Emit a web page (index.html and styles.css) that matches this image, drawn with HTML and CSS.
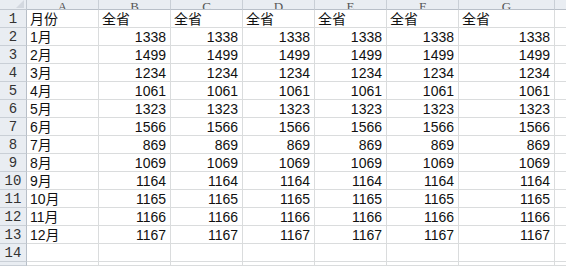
FILE: index.html
```html
<!DOCTYPE html>
<html>
<head>
<meta charset="utf-8">
<link rel="stylesheet" href="styles.css">
</head>
<body>
<div class="sheet" id="sheet"></div>
<script>
const vals = [1338,1499,1234,1061,1323,1566,869,1069,1164,1165,1166,1167];
const cols = ['A','B','C','D','E','F','G',''];
const s = document.getElementById('sheet');
function cell(cls, txt){const d=document.createElement('div');d.className=cls;if(txt){const sp=document.createElement('span');sp.textContent=txt;d.appendChild(sp);}s.appendChild(d);}
cell('corner');
cols.forEach(c=>cell('colhead', c));
for(let r=1;r<=15;r++){
  cell('rowhead', r<=14 ? String(r) : '');
  for(let c=0;c<8;c++){
    let t='', cls='cell';
    if(c<7){
      if(r===1){ t = c===0 ? '月份' : '全省'; }
      else if(r<=13){ if(c===0){t=(r-1)+'月';} else {t=String(vals[r-2]); cls+=' num';} }
    }
    cell(cls, t);
  }
}
</script>
</body>
</html>
```

FILE: styles.css
```css
html, body { margin: 0; padding: 0; background: #fff; }
body { width: 566px; height: 266px; overflow: hidden; }
.sheet {
  display: grid;
  grid-template-columns: 27px 72px 72px 72px 72px 72px 72px 96px 12px;
  grid-template-rows: 10px repeat(14, 18px) 4px;
  font-family: "Liberation Sans", "Noto Sans CJK SC", sans-serif;
  font-size: 14px;
  color: #111;
}
.corner {
  background: #e9edf2;
  border-right: 1px solid #c2c8d0;
  border-bottom: 1px solid #c2c8d0;
  position: relative;
  box-sizing: border-box;
}
.corner::after {
  content: "";
  position: absolute;
  right: 2px;
  bottom: 1px;
  width: 0; height: 0;
  border-left: 8px solid transparent;
  border-bottom: 8px solid #d3d8df;
}
.colhead {
  background: #e9edf2;
  border-right: 1px solid #c9cfd6;
  border-bottom: 1px solid #b8bfc8;
  box-sizing: border-box;
  overflow: hidden;
  display: flex;
  justify-content: center;
  align-items: flex-end;
  font-family: "Liberation Serif", serif;
  font-size: 13px;
  color: #555;
}
.colhead span { line-height: 13px; position: relative; top: 4px; }
.rowhead {
  background: #e9edf2;
  border-right: 1px solid #b8bfc8;
  border-bottom: 1px solid #c9cfd6;
  box-sizing: border-box;
  display: flex;
  justify-content: center;
  align-items: flex-end;
  overflow: hidden;
  font-family: "Liberation Mono", monospace;
  font-size: 14px;
  color: #333;
}
.rowhead span { line-height: 14px; padding-bottom: 1px; }
.cell {
  border-right: 1px solid #dadcdd;
  border-bottom: 1px solid #dadcdd;
  box-sizing: border-box;
  display: flex;
  align-items: flex-end;
  padding: 0 4px 0 3px;
  white-space: nowrap;
  overflow: hidden;
}
.cell span { line-height: 14px; padding-bottom: 1px; }
.cell.num { justify-content: flex-end; }
```
